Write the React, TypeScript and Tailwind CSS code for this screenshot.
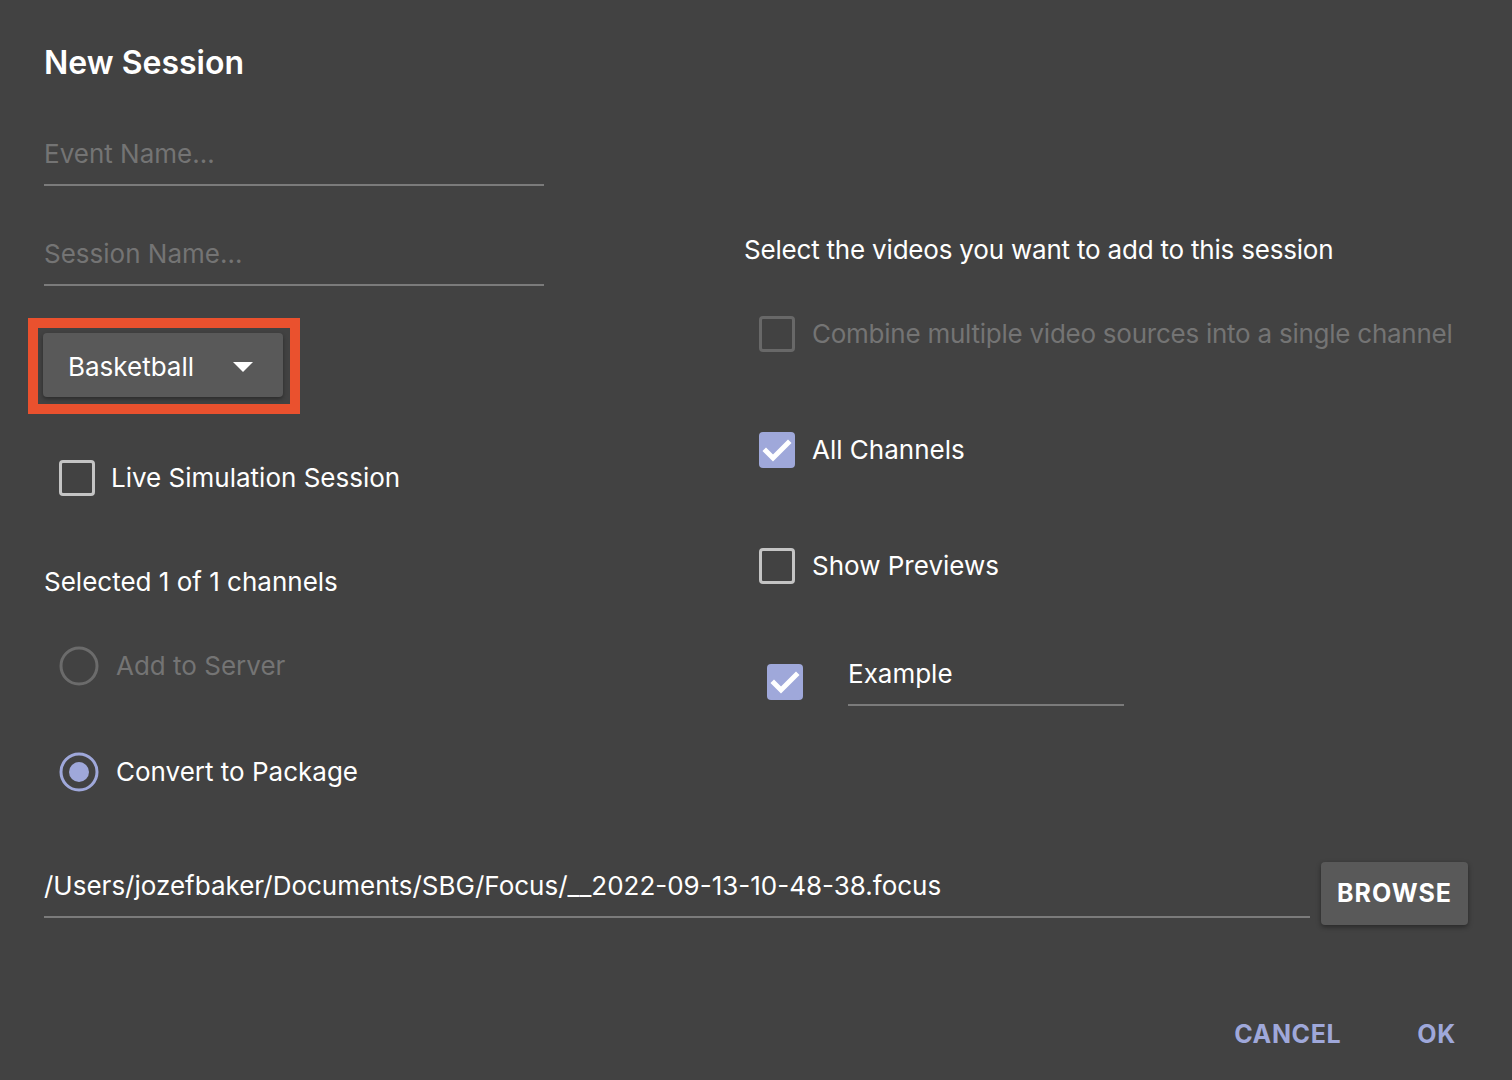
const lav = "#9fa8da";

function CheckBox({ checked, disabled }: { checked?: boolean; disabled?: boolean }) {
  if (checked) {
    return (
      <svg width="36" height="36" viewBox="0 0 36 36" className="shrink-0">
        <rect x="0" y="0" width="36" height="36" rx="4" fill={lav} />
        <path d="M7 19 L14 26 L29 11" fill="none" stroke="#fff" strokeWidth="5" strokeLinecap="square" />
      </svg>
    );
  }
  return (
    <div
      className={
        disabled
          ? "w-[36px] h-[36px] shrink-0 rounded-[4px] border-[3px] border-[#686868]"
          : "w-[36px] h-[36px] shrink-0 rounded-[4px] border-[3px] border-[#c4c4c4]"
      }
    />
  );
}

function Radio({ checked, disabled }: { checked?: boolean; disabled?: boolean }) {
  return (
    <svg width="40" height="40" viewBox="0 0 40 40" className="shrink-0">
      <circle cx="20" cy="20" r="18" fill="none" stroke={disabled ? "#6b6b6b" : lav} strokeWidth="3" />
      {checked && <circle cx="20" cy="20" r="10" fill={lav} />}
    </svg>
  );
}

function Field({ text, muted, className }: { text: string; muted?: boolean; className?: string }) {
  return (
    <div className={"border-b-2 border-[#7b7b7b] pb-[14px] " + (className ?? "")}>
      <div className={"text-[26px] leading-[32px] whitespace-nowrap " + (muted ? "text-[#747474]" : "text-white")}>
        {text}
      </div>
    </div>
  );
}

export default function App() {
  return (
    <div
      className="w-[1512px] h-[1080px] bg-[#424242] px-[44px] overflow-hidden"
      style={{ fontFamily: "Inter, 'Noto Sans', sans-serif" }}
    >
      <div className="flex gap-[200px]">
        {/* left column */}
        <div className="w-[500px] flex flex-col">
          <h1 className="mt-[46px] text-[32px] leading-[34px] font-semibold text-white">New Session</h1>
          <Field text="Event Name…" muted className="mt-[58px]" />
          <Field text="Session Name…" muted className="mt-[52px]" />

          <div className="mt-[32px] -ml-[16px] w-[272px] border-[10px] border-[#ea512e] pt-[5px] pl-[5px] pr-[7px] pb-[7px]">
            <div className="h-[64px] rounded-[4px] bg-[#595959] shadow-[0_2px_4px_rgba(0,0,0,0.35)] flex items-center pl-[25px] pr-[30px] justify-between">
              <span className="text-[26px] leading-[32px] mt-[3px] text-white">Basketball</span>
              <svg width="20" height="10" viewBox="0 0 20 10" className="mt-[3px]">
                <path d="M0 0 L20 0 L10 10 Z" fill="#fff" />
              </svg>
            </div>
          </div>

          <div className="mt-[46px] ml-[15px] flex items-center gap-[16px]">
            <CheckBox />
            <span className="text-[26px] leading-[32px] text-white">Live Simulation Session</span>
          </div>

          <div className="mt-[70px] text-[26px] leading-[32px] text-white">Selected 1 of 1 channels</div>

          <div className="mt-[48px] ml-[15px] flex items-center gap-[17px]">
            <Radio disabled />
            <span className="text-[26px] leading-[32px] text-[#747474]">Add to Server</span>
          </div>

          <div className="mt-[66px] ml-[15px] flex items-center gap-[17px]">
            <Radio checked />
            <span className="text-[26px] leading-[32px] text-white">Convert to Package</span>
          </div>
        </div>

        {/* right column */}
        <div className="flex flex-col">
          <div className="mt-[234px] text-[26px] leading-[32px] tracking-[-0.2px] text-white whitespace-nowrap">
            Select the videos you want to add to this session
          </div>

          <div className="mt-[50px] ml-[15px] flex items-center gap-[17px]">
            <CheckBox disabled />
            <span className="text-[26px] leading-[32px] tracking-[-0.25px] text-[#747474] whitespace-nowrap">
              Combine multiple video sources into a single channel
            </span>
          </div>

          <div className="mt-[80px] ml-[15px] flex items-center gap-[17px]">
            <CheckBox checked />
            <span className="text-[26px] leading-[32px] text-white">All Channels</span>
          </div>

          <div className="mt-[80px] ml-[15px] flex items-center gap-[17px]">
            <CheckBox />
            <span className="text-[26px] leading-[32px] text-white">Show Previews</span>
          </div>

          <div className="mt-[74px] ml-[23px] flex items-start gap-[45px]">
            <div className="mt-[6px]">
              <CheckBox checked />
            </div>
            <Field text="Example" className="w-[276px]" />
          </div>
        </div>
      </div>

      {/* path row */}
      <div className="mt-[70px] flex items-start gap-[11px]">
        <Field text="/Users/jozefbaker/Documents/SBG/Focus/__2022-09-13-10-48-38.focus" className="flex-1 pt-[8px] pb-[13px]" />
        <button className="w-[147px] h-[63px] rounded-[4px] bg-[#595959] shadow-[0_2px_5px_rgba(0,0,0,0.4)] text-white text-[25px] font-bold tracking-[1px]">
          BROWSE
        </button>
      </div>

      {/* footer */}
      <div className="mt-[93px] flex justify-end gap-[76px] pr-[12px]">
        <span className="text-[25px] leading-[32px] font-bold tracking-[0.6px] text-[#9fa8da]">CANCEL</span>
        <span className="text-[25px] leading-[32px] font-bold tracking-[0.8px] text-[#9fa8da]">OK</span>
      </div>
    </div>
  );
}
